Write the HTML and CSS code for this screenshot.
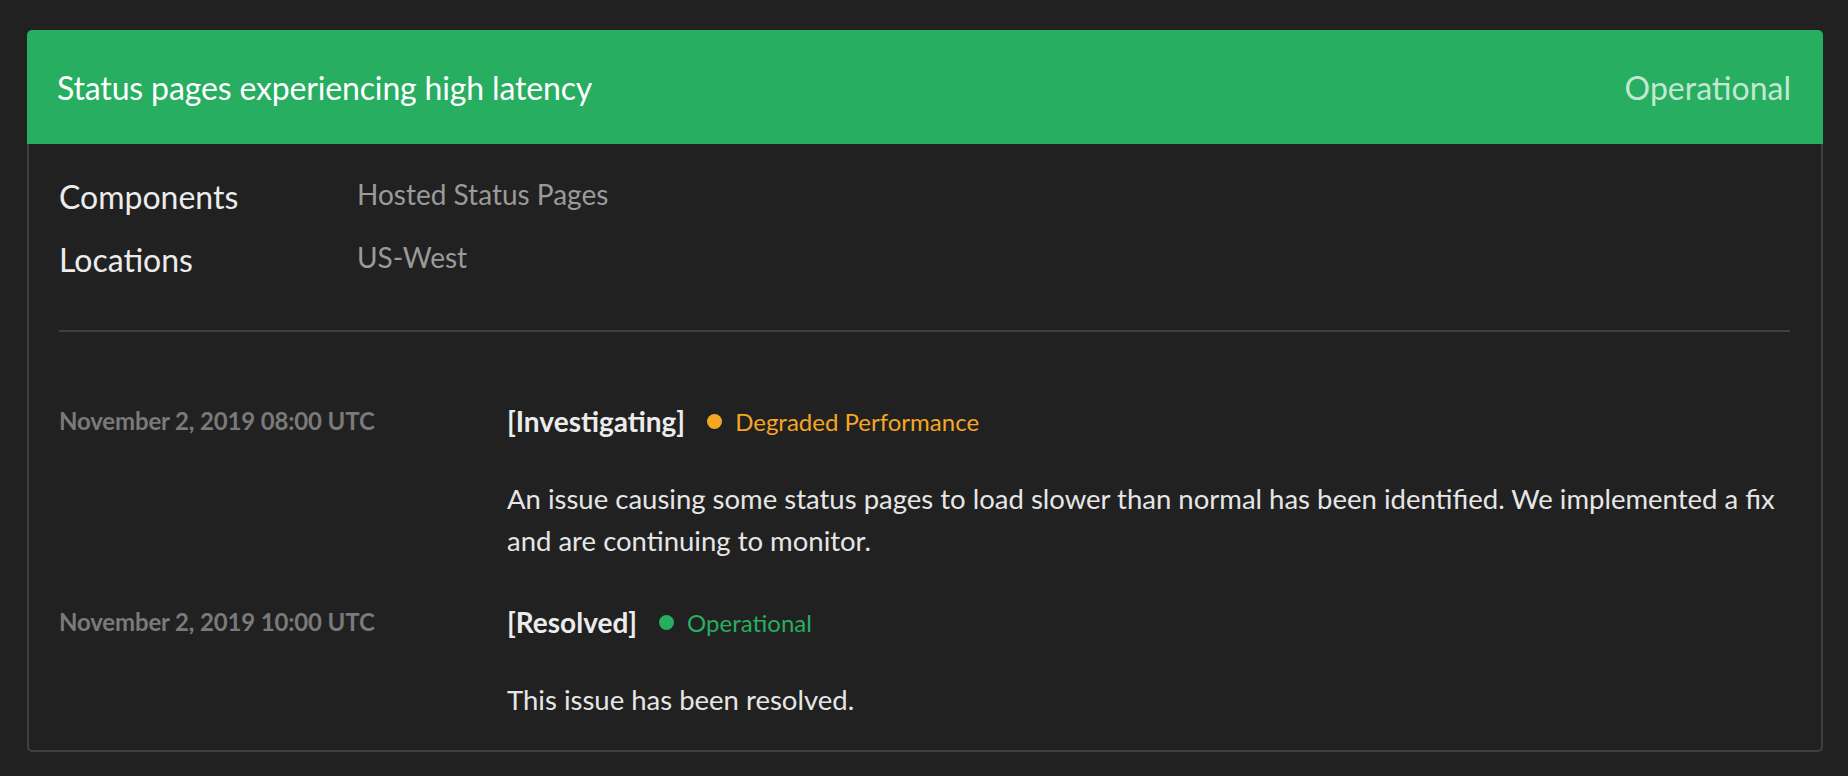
FILE: index.html
```html
<!DOCTYPE html>
<html lang="en">
<head>
<meta charset="utf-8">
<title>Incident</title>
<link rel="stylesheet" href="styles.css">
</head>
<body>
<div class="page">
  <section class="incident">
    <header class="incident-header">
      <h1 class="incident-title">Status pages experiencing high latency</h1>
      <span class="incident-status">Operational</span>
    </header>
    <div class="incident-body">
      <dl class="meta">
        <dt class="meta-label">Components</dt>
        <dd class="meta-value">Hosted Status Pages</dd>
        <dt class="meta-label">Locations</dt>
        <dd class="meta-value">US-West</dd>
      </dl>
      <hr class="divider">
      <div class="updates">
        <div class="update">
          <div class="update-date">November 2, 2019 08:00 UTC</div>
          <div class="update-content">
            <div class="update-head">
              <span class="update-kind">[Investigating]</span>
              <span class="badge badge-degraded"><span class="dot"></span>Degraded Performance</span>
            </div>
            <p class="update-text">An issue causing some status pages to load slower than normal has been identified. We implemented a fix and are continuing to monitor.</p>
          </div>
        </div>
        <div class="update">
          <div class="update-date">November 2, 2019 10:00 UTC</div>
          <div class="update-content">
            <div class="update-head">
              <span class="update-kind">[Resolved]</span>
              <span class="badge badge-ok"><span class="dot"></span>Operational</span>
            </div>
            <p class="update-text">This issue has been resolved.</p>
          </div>
        </div>
      </div>
    </div>
  </section>
</div>
</body>
</html>
```
FILE: styles.css
```css
* { box-sizing: border-box; }
html, body {
  margin: 0;
  padding: 0;
  background: #212121;
  font-family: Lato, "Open Sans", sans-serif;
  color: #e6e6e6;
}
.page {
  padding: 30px 25px 0 27px;
}
.incident {
  width: 100%;
}
.incident-header {
  display: flex;
  align-items: center;
  justify-content: space-between;
  height: 114px;
  padding: 2px 32px 0 30px;
  background: #27ae60;
  border-radius: 5px 5px 0 0;
}
.incident-title {
  margin: 0;
  font-size: 32px;
  line-height: 38px;
  letter-spacing: -0.15px;
  font-weight: 400;
  color: #ffffff;
}
.incident-status {
  font-size: 32px;
  line-height: 38px;
  color: rgba(255, 255, 255, 0.72);
}
.incident-body {
  border: 2px solid #414141;
  border-top: none;
  border-radius: 0 0 5px 5px;
  padding: 33px 31px 29px 30px;
}
.meta {
  display: grid;
  grid-template-columns: 298px 1fr;
  row-gap: 23px;
  margin: 0;
  align-items: start;
}
.meta-label {
  font-size: 32px;
  line-height: 40px;
  color: #ececec;
}
.meta-value {
  margin: 0;
  font-size: 28px;
  line-height: 35px;
  color: #9a9a9a;
}
.divider {
  margin: 50px 0 0;
  border: none;
  height: 2px;
  background: #404040;
}
.updates {
  padding-top: 69px;
  display: flex;
  flex-direction: column;
  gap: 40px;
}
.update {
  display: flex;
}
.update-date {
  flex: 0 0 448px;
  font-size: 24px;
  font-weight: 700;
  line-height: 40px;
  letter-spacing: -0.15px;
  color: #7a7a7a;
}
.update-content {
  flex: 1;
}
.update-head {
  display: flex;
  align-items: center;
  height: 40px;
}
.update-kind {
  font-size: 28px;
  font-weight: 700;
  color: #ececec;
}
.badge {
  display: inline-flex;
  align-items: center;
  margin-left: 22px;
  font-size: 24px;
}
.dot {
  width: 15px;
  height: 15px;
  border-radius: 50%;
  margin-right: 13px;
  background: currentColor;
}
.badge-degraded { color: #f5a623; }
.badge-ok { color: #27ae60; }
.update-text {
  margin: 37px 0 0;
  font-size: 27.5px;
  line-height: 42px;
  color: #e6e6e6;
}
```
